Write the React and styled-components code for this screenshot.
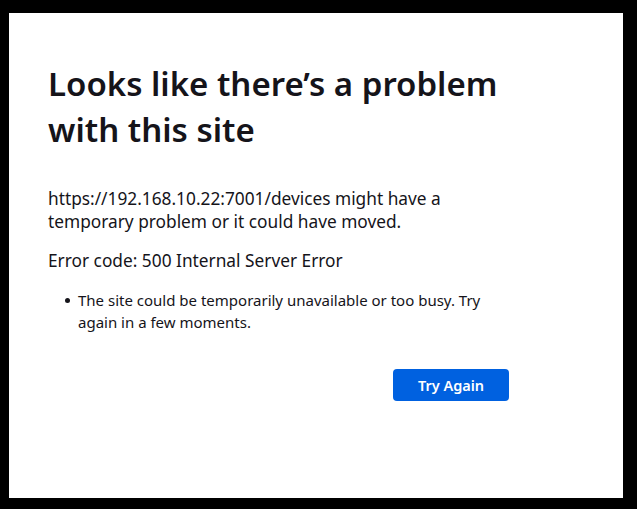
import React from "react";
import styled, { createGlobalStyle } from "styled-components";

const Global = createGlobalStyle`
  html, body { margin: 0; padding: 0; background: #000; }
  body { width: 637px; height: 509px; overflow: hidden; }
`;

const Frame = styled.div`
  box-sizing: border-box;
  width: 637px;
  height: 509px;
  padding: 13px 14px 11px 9px;
  background: #000;
`;

const Panel = styled.main`
  box-sizing: border-box;
  height: 100%;
  background: #fff;
  padding: 48px 0 0 39px;
  font-family: "Noto Sans", "Open Sans", sans-serif;
  color: #15141a;
`;

const Column = styled.div`
  width: 461px;
  display: flex;
  flex-direction: column;
`;

const Title = styled.h1`
  margin: 0 0 34px;
  font-size: 33px;
  line-height: 46px;
  font-weight: 600;
`;

const Para = styled.p`
  margin: 0 0 16px;
  font-size: 17.3px;
  line-height: 23px;
`;

const List = styled.ul`
  margin: 1px 0 0;
  padding: 0;
  list-style: none;
  font-size: 15px;
  line-height: 22px;
`;

const Item = styled.li`
  display: flex;
  align-items: flex-start;
  padding-right: 20px;
`;

const Marker = styled.span`
  flex: 0 0 5px;
  height: 5px;
  margin: 9px 8px 0 17px;
  border-radius: 50%;
  background: #15141a;
`;

const Actions = styled.div`
  display: flex;
  justify-content: flex-end;
  margin-top: 36px;
`;

const Button = styled.button`
  width: 116px;
  height: 32px;
  padding: 0;
  border: none;
  border-radius: 4px;
  background: #0061e0;
  color: #fff;
  font-family: "Noto Sans", sans-serif;
  font-weight: 600;
  font-size: 14.5px;
  cursor: pointer;
`;

export default function App() {
  return (
    <Frame>
      <Global />
      <Panel>
        <Column>
          <Title>Looks like there’s a problem with this site</Title>
          <Para>https://192.168.10.22:7001/devices might have a temporary problem or it could have moved.</Para>
          <Para>Error code: 500 Internal Server Error</Para>
          <List>
            <Item>
              <Marker />
              <span>The site could be temporarily unavailable or too busy. Try again in a few moments.</span>
            </Item>
          </List>
          <Actions>
            <Button>Try Again</Button>
          </Actions>
        </Column>
      </Panel>
    </Frame>
  );
}
